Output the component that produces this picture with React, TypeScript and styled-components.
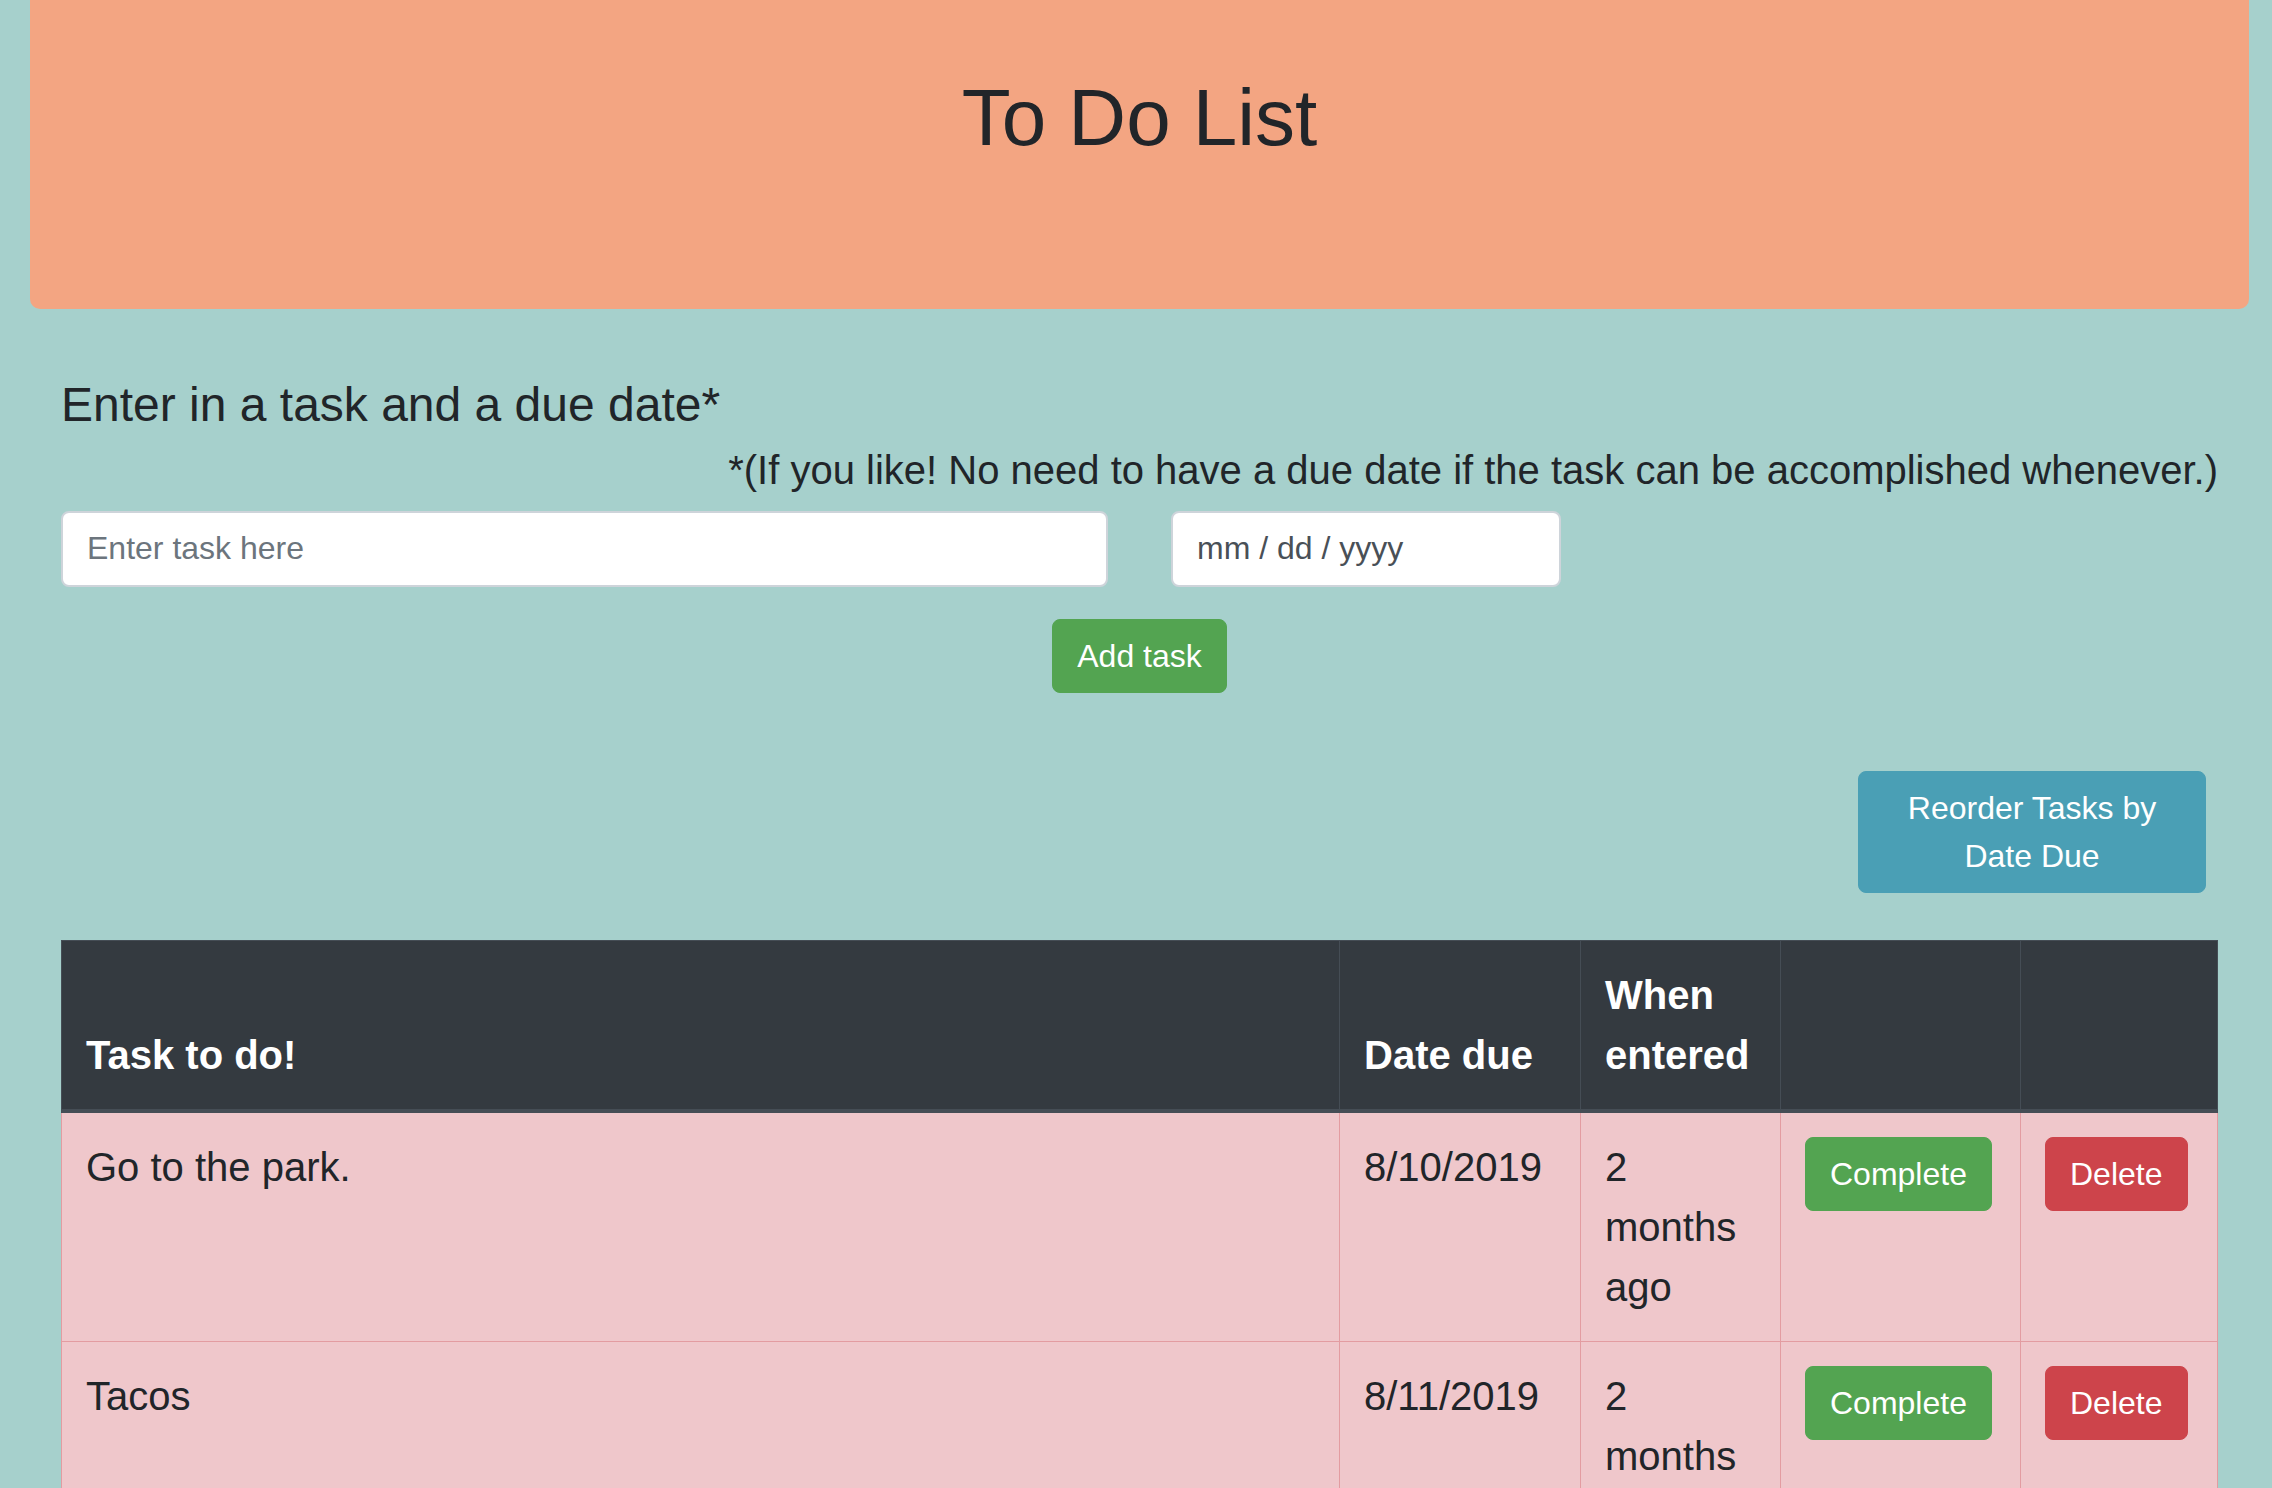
import React from "react";
import styled, { createGlobalStyle } from "styled-components";

const GlobalStyle = createGlobalStyle`
  html, body {
    margin: 0;
    padding: 0;
    background: #a6d0cc;
  }
  html {
    overflow: hidden;
  }
  body {
    font-family: "Liberation Sans", Arial, sans-serif;
    color: #212529;
  }
  * { box-sizing: border-box; }
`;

const Page = styled.div`
  padding: 0 23px 0 30px;
`;

const Jumbotron = styled.header`
  height: 309px;
  padding-top: 70px;
  background: #f3a582;
  border-radius: 0 0 10px 10px;
  text-align: center;
`;

const Title = styled.h1`
  margin: 0;
  font-size: 80px;
  line-height: 1.2;
  font-weight: 400;
  color: #212529;
`;

const Content = styled.main`
  padding: 0 31px 0;
`;

const Prompt = styled.h4`
  margin: 67px 0 0;
  font-size: 48px;
  line-height: 1.2;
  font-weight: 400;
`;

const Note = styled.h5`
  margin: 12px 0 0;
  font-size: 40px;
  line-height: 1.2;
  font-weight: 400;
  text-align: right;
`;

const InputRow = styled.div`
  display: flex;
  gap: 63px;
  margin-top: 17px;
`;

const Field = styled.input<{ $width: number; $dark?: boolean }>`
  width: ${(p) => p.$width}px;
  height: 76px;
  padding: 12px 24px;
  font-family: inherit;
  font-size: 32px;
  line-height: 48px;
  color: #495057;
  background: #fff;
  border: 2px solid #ced4da;
  border-radius: 8px;
  outline: none;
  &::placeholder {
    color: ${(p) => (p.$dark ? "#495057" : "#6c757d")};
    opacity: 1;
  }
`;

const CenterRow = styled.div`
  display: flex;
  justify-content: center;
  margin-top: 32px;
`;

const RightRow = styled.div`
  display: flex;
  justify-content: flex-end;
  margin-top: 78px;
  padding-right: 12px;
`;

const Button = styled.button<{ $tone: "green" | "red" | "blue"; $width?: number }>`
  ${(p) => (p.$width ? `width: ${p.$width}px;` : "")}
  padding: 12px 24px;
  font-family: inherit;
  font-size: 32px;
  line-height: 48px;
  font-weight: 400;
  color: #fff;
  text-align: center;
  border-radius: 8px;
  cursor: pointer;
  background: ${(p) => (p.$tone === "green" ? "#53a451" : p.$tone === "red" ? "#cd444b" : "#4a9fb5")};
  border: 1px solid ${(p) => (p.$tone === "green" ? "#53a451" : p.$tone === "red" ? "#cd444b" : "#4a9fb5")};
`;

const Table = styled.table`
  width: 100%;
  margin-top: 47px;
  border-collapse: collapse;
  table-layout: fixed;
`;

const HeadCell = styled.th`
  padding: 24px;
  font-size: 40px;
  line-height: 60px;
  font-weight: 700;
  text-align: left;
  vertical-align: bottom;
  color: #fff;
  background: #343a40;
  border: 1px solid #454d55;
  border-bottom: 4px solid #454d55;
`;

const Row = styled.tr`
  background: #efc7cb;
`;

const Cell = styled.td`
  padding: 24px;
  font-size: 40px;
  line-height: 60px;
  vertical-align: top;
  color: #212529;
  border: 1px solid #e39ca1;
`;

const tasks = [
  { task: "Go to the park.", due: "8/10/2019", entered: "2 months ago" },
  { task: "Tacos", due: "8/11/2019", entered: "2 months ago" },
];

export default function App() {
  return (
    <Page>
      <GlobalStyle />
      <Jumbotron>
        <Title>To Do List</Title>
      </Jumbotron>
      <Content>
        <Prompt>Enter in a task and a due date*</Prompt>
        <Note>*(If you like! No need to have a due date if the task can be accomplished whenever.)</Note>
        <InputRow>
          <Field $width={1047} placeholder="Enter task here" />
          <Field $width={390} $dark placeholder="mm / dd / yyyy" />
        </InputRow>
        <CenterRow>
          <Button $tone="green">Add task</Button>
        </CenterRow>
        <RightRow>
          <Button $tone="blue" $width={348}>Reorder Tasks by Date Due</Button>
        </RightRow>
        <Table>
          <colgroup>
            <col />
            <col style={{ width: 241 }} />
            <col style={{ width: 200 }} />
            <col style={{ width: 240 }} />
            <col style={{ width: 197 }} />
          </colgroup>
          <thead>
            <tr>
              <HeadCell>Task to do!</HeadCell>
              <HeadCell>Date due</HeadCell>
              <HeadCell>When entered</HeadCell>
              <HeadCell />
              <HeadCell />
            </tr>
          </thead>
          <tbody>
            {tasks.map((t) => (
              <Row key={t.task}>
                <Cell>{t.task}</Cell>
                <Cell>{t.due}</Cell>
                <Cell>{t.entered}</Cell>
                <Cell>
                  <Button $tone="green">Complete</Button>
                </Cell>
                <Cell>
                  <Button $tone="red">Delete</Button>
                </Cell>
              </Row>
            ))}
          </tbody>
        </Table>
      </Content>
    </Page>
  );
}
